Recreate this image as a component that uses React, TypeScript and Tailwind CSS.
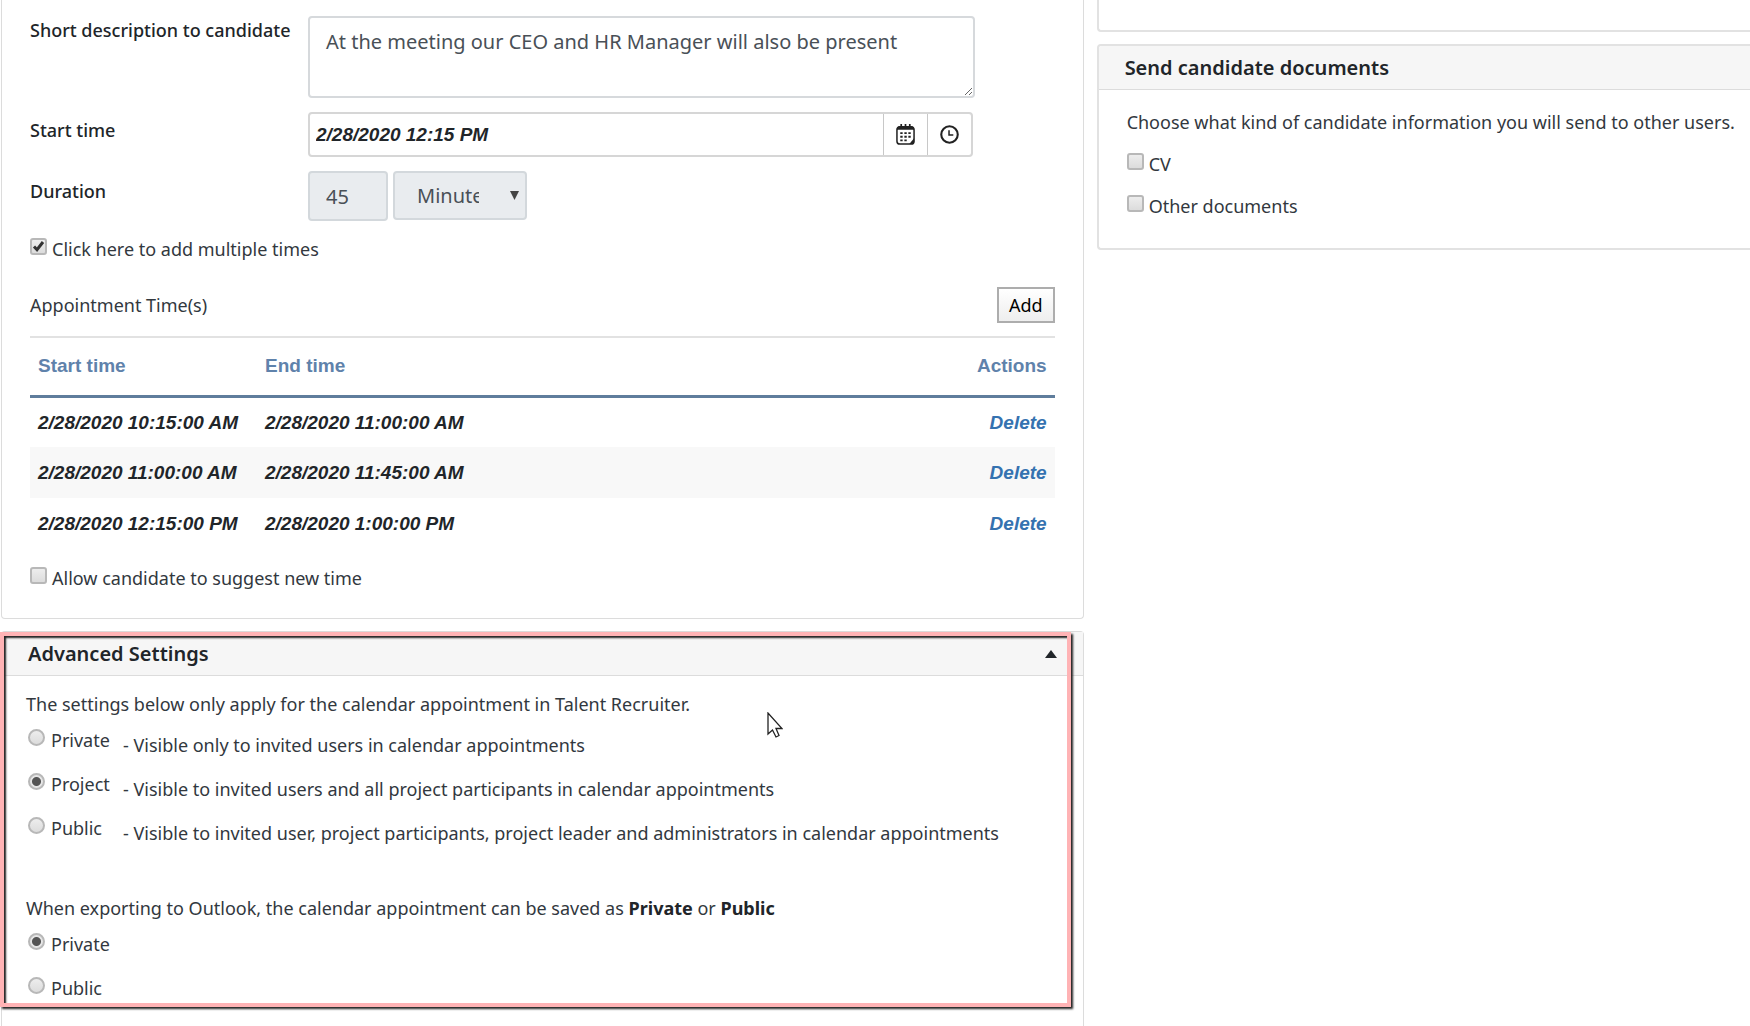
import { ReactNode } from 'react'

const appointments = [
  { start: '2/28/2020 10:15:00 AM', end: '2/28/2020 11:00:00 AM' },
  { start: '2/28/2020 11:00:00 AM', end: '2/28/2020 11:45:00 AM' },
  { start: '2/28/2020 12:15:00 PM', end: '2/28/2020 1:00:00 PM' },
]

const visibilityOptions = [
  { label: 'Private', hint: '- Visible only to invited users in calendar appointments' },
  { label: 'Project', hint: '- Visible to invited users and all project participants in calendar appointments' },
  {
    label: 'Public',
    hint: '- Visible to invited user, project participants, project leader and administrators in calendar appointments',
  },
]

const outlookOptions = ['Private', 'Public']

function Checkbox({ label, checked = false }: { label: string; checked?: boolean }) {
  return (
    <label className="flex w-fit items-start gap-[5px] whitespace-nowrap">
      <span className="relative mt-px block size-[17px]">
        <input
          type="checkbox"
          defaultChecked={checked}
          className="peer block size-[17px] appearance-none rounded-[3px] border-2 border-[#b8b8b8] bg-linear-to-b from-[#ededed] to-[#dcdcdc]"
        />
        <svg
          viewBox="0 0 17 17"
          className="pointer-events-none absolute inset-0 hidden peer-checked:block"
          fill="none"
          stroke="#333"
          strokeWidth="3"
        >
          <path d="M4 8.500l3 3.200L13 4" />
        </svg>
      </span>
      {label}
    </label>
  )
}

function Radio({ name, label, checked = false }: { name: string; label: string; checked?: boolean }) {
  return (
    <label className="flex w-[95px] items-start gap-1.5">
      <input
        type="radio"
        name={name}
        defaultChecked={checked}
        className="mt-px block size-[17px] shrink-0 appearance-none rounded-full border-2 border-[#b8b8b8] bg-linear-to-b from-[#ededed] to-[#dcdcdc] checked:bg-[radial-gradient(circle,#555_0_4px,#e6e6e6_5px)]"
      />
      {label}
    </label>
  )
}

function CardHeader({ title, children }: { title: string; children?: ReactNode }) {
  return (
    <div className="flex h-11 items-center justify-between border-b border-[#dcdcdc] bg-[#f6f6f6] pr-[26px] pl-[26px]">
      <h2 className="text-xl font-semibold text-[#212529]">{title}</h2>
      {children}
    </div>
  )
}

function CalendarIcon() {
  return (
    <svg width="19" height="21" viewBox="0 0 20 22">
      <rect x="1" y="3" width="18" height="18" rx="3" fill="#fff" stroke="#222" strokeWidth="1.600" />
      <path d="M1 6V5a3 3 0 0 1 3-3h12a3 3 0 0 1 3 3v1z" fill="#222" />
      <path d="M5.500 0v4M10 0v4M14.500 0v4" stroke="#222" strokeWidth="1.800" />
      <path
        d="M4.500 8.500h2.500v2H4.500zM8.800 8.500h2.500v2H8.800zM13 8.500h2.500v2H13zM4.500 12.300h2.500v2H4.500zM8.800 12.300h2.500v2H8.800zM13 12.300h2.500v2H13zM4.500 16.200h2.500v2H4.500zM8.800 16.200h2.500v2H8.800z"
        fill="#222"
      />
      <path d="M19 15v3a3 3 0 0 1-3 3h-2z" fill="#222" />
    </svg>
  )
}

function ClockIcon() {
  return (
    <svg width="19" height="19" viewBox="0 0 20 20" fill="none" stroke="#222">
      <circle cx="10" cy="10" r="8.700" strokeWidth="2.200" />
      <path d="M9.500 5.500V10.500H14" strokeWidth="1.600" />
    </svg>
  )
}

export default function App() {
  return (
    <div className="grid h-screen grid-cols-[61.9%_1fr] gap-x-[13px] overflow-hidden bg-white pl-px font-['Noto_Sans',sans-serif] text-lg leading-6 text-[#32383e]">
      {/* Appointment form */}
      <main className="flex min-w-0 flex-col gap-3">
        <section className="shrink-0 rounded-b border border-t-0 border-[#dcdcdc] px-7 pt-4 pb-7">
          <div className="flex flex-col gap-3.5">
            <div className="flex items-start">
              <label htmlFor="description" className="w-[278px] shrink-0 pt-0.5 font-medium whitespace-nowrap text-[#212529]">
                Short description to candidate
              </label>
              <textarea
                id="description"
                className="mr-20 block h-[82px] flex-1 rounded border-2 border-[#d6d9dc] px-4 py-3 text-xl leading-6 text-[#495057]"
                defaultValue="At the meeting our CEO and HR Manager will also be present"
              />
            </div>

            <div className="flex items-start">
              <label htmlFor="start" className="w-[278px] shrink-0 pt-1.5 font-medium text-[#212529]">
                Start time
              </label>
              <div className="mr-[82px] flex h-[45px] flex-1 overflow-hidden rounded border-2 border-[#d6d6d6]">
                <input
                  id="start"
                  type="text"
                  defaultValue="2/28/2020 12:15 PM"
                  className="min-w-0 flex-1 px-1.5 font-['Liberation_Sans',sans-serif] text-[19px] font-bold text-[#212529] italic"
                />
                <button type="button" aria-label="Pick date" className="flex w-11 items-center justify-center border-l border-[#c8c8c8]">
                  <CalendarIcon />
                </button>
                <button type="button" aria-label="Pick time" className="flex w-11 items-center justify-center border-l border-[#c8c8c8]">
                  <ClockIcon />
                </button>
              </div>
            </div>

            <div className="flex items-start">
              <label htmlFor="duration" className="w-[278px] shrink-0 pt-2 font-medium text-[#212529]">
                Duration
              </label>
              <input
                id="duration"
                type="text"
                disabled
                defaultValue="45"
                className="h-[50px] w-20 rounded border-2 border-[#d3d8dc] bg-[#e9ecef] px-4 text-xl text-[#495057]"
              />
              <div className="relative ml-[5px]">
                <select
                  aria-label="Duration unit"
                  disabled
                  className="block h-[49px] w-[134px] appearance-none rounded border-2 border-[#d3d8dc] bg-[#e9ecef] pr-[46px] pl-[22px] text-xl text-[#495057] opacity-100"
                >
                  <option>Minutes</option>
                </select>
                <svg width="9" height="9" viewBox="0 0 9 9" className="pointer-events-none absolute top-5 right-2">
                  <path d="M0 0h9L4.500 9z" fill="#444" />
                </svg>
              </div>
            </div>
          </div>

          <div className="mt-4">
            <Checkbox label="Click here to add multiple times" checked />
          </div>

          <div className="mt-[26px] flex items-center justify-between">
            <span>Appointment Time(s)</span>
            <button
              type="button"
              className="h-9 border-2 border-[#adadad] bg-linear-to-b from-white to-[#eeeeee] px-2.5 text-lg leading-6 text-black"
            >
              Add
            </button>
          </div>

          <table className="mt-[13px] w-full border-t-2 border-[#e2e2e2] font-['Liberation_Sans',sans-serif] text-[19px] font-bold">
            <thead>
              <tr className="h-[59px] border-b-3 border-[#5f7d9c] text-[#5f82ab]">
                <th className="w-[227px] px-2 text-left">Start time</th>
                <th className="px-2 text-left">End time</th>
                <th className="px-2 text-right">Actions</th>
              </tr>
            </thead>
            <tbody>
              {appointments.map(({ start, end }) => (
                <tr key={start} className="h-[51px] text-[#212529] italic even:bg-[#f8f8f8]">
                  <td className="px-2 pt-px whitespace-nowrap">{start}</td>
                  <td className="px-2 pt-px whitespace-nowrap">{end}</td>
                  <td className="px-2 pt-px text-right">
                    <a href="#" className="text-[#3572b0]">
                      Delete
                    </a>
                  </td>
                </tr>
              ))}
            </tbody>
          </table>

          <div className="mt-[17px]">
            <Checkbox label="Allow candidate to suggest new time" />
          </div>
        </section>

        {/* Advanced settings */}
        <section className="relative shrink-0 rounded-t border border-b-0 border-[#dcdcdc] pb-12">
          <CardHeader title="Advanced Settings">
            <button type="button" aria-label="Collapse">
              <svg width="12" height="8" viewBox="0 0 12 8">
                <path d="M6 0l6 8H0z" fill="#212529" />
              </svg>
            </button>
          </CardHeader>
          <div className="pt-4 pl-6">
            <p>The settings below only apply for the calendar appointment in Talent Recruiter.</p>
            <fieldset className="mt-3 pl-0.5">
              {visibilityOptions.map(({ label, hint }) => (
                <div key={label} className="flex h-11">
                  <Radio name="visibility" label={label} checked={label === 'Project'} />
                  <p className="pt-[5px] whitespace-nowrap">{hint}</p>
                </div>
              ))}
            </fieldset>
            <p className="mt-9">
              When exporting to Outlook, the calendar appointment can be saved as{' '}
              <strong className="text-[#212529]">Private</strong> or <strong className="text-[#212529]">Public</strong>
            </p>
            <fieldset className="mt-3 pl-0.5">
              {outlookOptions.map((label) => (
                <div key={label} className="flex h-11">
                  <Radio name="outlook" label={label} checked={label === 'Private'} />
                </div>
              ))}
            </fieldset>
          </div>

          {/* Highlight frame */}
          <div className="pointer-events-none absolute top-0 right-3 -left-0.5 h-[375px] border-4 border-[#ffb3b5] shadow-[2px_2px_2px_#222,inset_2px_2px_2px_#222]" />

          {/* Pointer */}
          <svg width="16" height="26" viewBox="0 0 16 26" className="pointer-events-none absolute top-20 left-[765px]">
            <path d="M1 1v21l4.500-4L9 25l3-1.500L9 16.500h6z" fill="#fff" stroke="#222" strokeWidth="1.300" />
          </svg>
        </section>
      </main>

      {/* Documents column */}
      <aside className="flex min-w-0 flex-col gap-3">
        <div className="h-8 shrink-0 rounded-bl border-b-2 border-l-2 border-[#e2e2e2]" />
        <section className="overflow-hidden rounded-l border-y-2 border-l-2 border-[#e2e2e2]">
          <CardHeader title="Send candidate documents" />
          <div className="pt-5 pb-[30px] pl-7 whitespace-nowrap">
            <p>Choose what kind of candidate information you will send to other users.</p>
            <div className="mt-[18px] flex flex-col gap-[18px]">
              <Checkbox label="CV" />
              <Checkbox label="Other documents" />
            </div>
          </div>
        </section>
      </aside>
    </div>
  )
}
